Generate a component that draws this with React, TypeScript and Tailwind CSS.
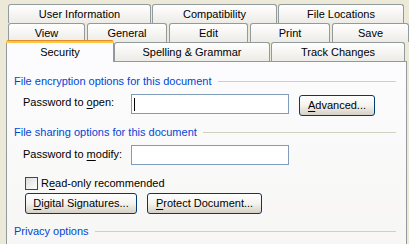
const font = { fontFamily: '"Liberation Sans", Arial, sans-serif' }

const row1 = [
  { label: 'User Information', w: 'w-[143px]' },
  { label: 'Compatibility', w: 'w-[125px]' },
  { label: 'File Locations', w: 'w-[126px]' },
]

const row2 = [
  { label: 'View', w: 'w-[77px]' },
  { label: 'General', w: 'w-[80px]' },
  { label: 'Edit', w: 'w-[79px]' },
  { label: 'Print', w: 'w-[80px]' },
  { label: 'Save', w: 'w-[77px]' },
]

function Tab({ label, w }: { label: string; w: string }) {
  return (
    <div
      className={`${w} h-[19px] pt-[1px] flex items-center justify-center rounded-t-[3px] border border-b-0 border-[#919B9C] bg-gradient-to-b from-white to-[#ECEBE6] text-black`}
    >
      {label}
    </div>
  )
}

function GroupHeader({ title, className = '' }: { title: string; className?: string }) {
  return (
    <div className={`flex items-center h-[13px] w-[382px] ml-[7px] ${className}`}>
      <span className="text-[#0046D5] whitespace-nowrap">{title}</span>
      <div className="flex-1 h-px bg-[#D0D0BF] ml-[6px] -mt-px" />
    </div>
  )
}

function XpButton({ w, children }: { w: string; children: React.ReactNode }) {
  return (
    <div
      className={`${w} h-[21px] flex items-center justify-center rounded-[3px] border border-[#003C74] bg-gradient-to-b from-white via-[#F4F3EE] to-[#D6D0C5] text-black whitespace-nowrap`}
    >
      {children}
    </div>
  )
}

export default function App() {
  return (
    <div
      className="w-[409px] h-[244px] overflow-hidden bg-[#ECE9D8] text-[11px] leading-[13px] text-black"
      style={font}
    >
      <div className="pt-[4px]">
        <div className="flex gap-[1px] pl-[8px]">
          {row1.map((t) => (
            <Tab key={t.label} {...t} />
          ))}
        </div>
        <div className="flex gap-[2px] pl-[8px]">
          {row2.map((t) => (
            <Tab key={t.label} {...t} />
          ))}
        </div>
        <div className="flex items-start pl-[6px] h-[19px]">
          <div className="relative z-10 -mt-[2px] w-[108px] h-[22px] flex flex-col rounded-t-[3px] overflow-hidden">
            <div className="h-[3px] border-t border-[#E68B2C] bg-[#FFC73C]" />
            <div className="flex-1 flex items-center justify-center border-x border-[#919B9C] bg-[#FCFCFE]">
              Security
            </div>
          </div>
          <div className="w-[156px] h-[19px] pt-[1px] flex items-center justify-center rounded-t-[3px] border border-b-0 border-[#919B9C] bg-gradient-to-b from-white to-[#ECEBE6]">
            Spelling &amp; Grammar
          </div>
          <div className="ml-[1px] w-[134px] h-[19px] pt-[1px] flex items-center justify-center rounded-t-[3px] border border-b-0 border-[#919B9C] bg-gradient-to-b from-white to-[#ECEBE6]">
            Track Changes
          </div>
        </div>
      </div>

      <div className="ml-[6px] w-[401px] h-[300px] border border-[#919B9C] bg-gradient-to-b from-[#FCFCFE] to-[#F4F3EE] flex flex-col">
        <GroupHeader title="File encryption options for this document" className="mt-[13px]" />

        <div className="flex items-start mt-[6px] ml-[16px]">
          <span className="w-[108px] mt-[2px] whitespace-nowrap">
            Password to <span className="underline underline-offset-2">o</span>pen:
          </span>
          <div className="w-[158px] h-[20px] border border-[#7F9DB9] bg-white flex items-center pl-[2px]">
            <div className="w-px h-[13px] bg-black" />
          </div>
          <div className="ml-[10px] mt-[1px]">
            <XpButton w="w-[76px]">
              <span>
                <span className="underline underline-offset-2">A</span>dvanced...
              </span>
            </XpButton>
          </div>
        </div>

        <GroupHeader title="File sharing options for this document" className="mt-[10px]" />

        <div className="flex items-start mt-[6px] ml-[16px]">
          <span className="w-[108px] mt-[3px] whitespace-nowrap">
            Password to <span className="underline underline-offset-2">m</span>odify:
          </span>
          <div className="w-[158px] h-[20px] border border-[#7F9DB9] bg-white" />
        </div>

        <div className="flex items-center mt-[12px] ml-[18px] h-[13px]">
          <div className="w-[13px] h-[13px] border border-[#1C5180] bg-gradient-to-br from-[#DCDCD7] to-white" />
          <span className="ml-[3px]">
            R<span className="underline underline-offset-2">e</span>ad-only recommended
          </span>
        </div>

        <div className="flex gap-[10px] mt-[3px] ml-[18px]">
          <XpButton w="w-[112px]">
            <span>
              <span className="underline underline-offset-2">D</span>igital Signatures...
            </span>
          </XpButton>
          <XpButton w="w-[115px]">
            <span>
              <span className="underline underline-offset-2">P</span>rotect Document...
            </span>
          </XpButton>
        </div>

        <GroupHeader title="Privacy options" className="mt-[11px]" />
      </div>
    </div>
  )
}
